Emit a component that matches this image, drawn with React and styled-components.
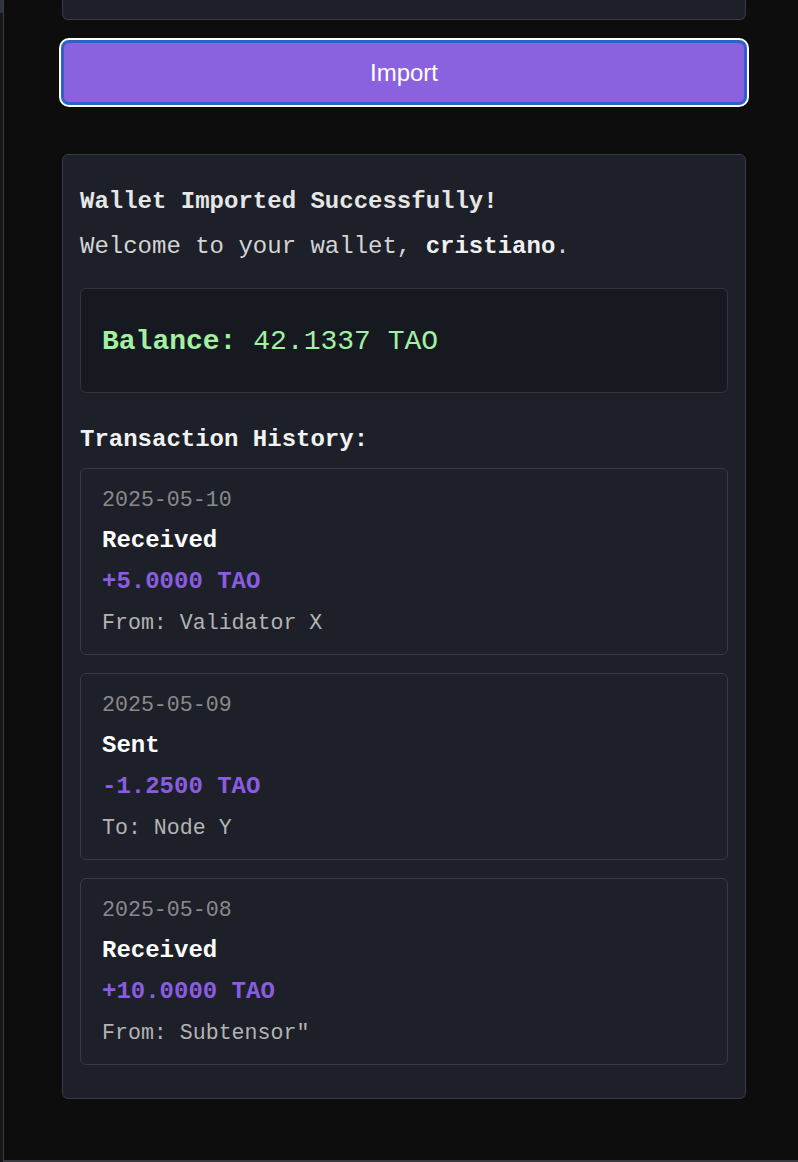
import React from 'react';
import styled, { createGlobalStyle } from 'styled-components';

const GlobalStyle = createGlobalStyle`
  html, body {
    margin: 0;
    padding: 0;
    background: #0d0d0d;
  }
  body {
    font-family: "Liberation Mono", "Courier New", monospace;
  }
`

const Screen = styled.div`
  display: flex;
  width: 798px;
  height: 1162px;
  overflow: hidden;
  background: #0d0d0d;
`

const Backdrop = styled.div`
  width: 3px;
  flex-shrink: 0;
  border-right: 1px solid #3a3c42;
  background: linear-gradient(#2f3440 0 13px, #151618 13px);
`

const Panel = styled.div`
  flex: 1;
  display: flex;
  flex-direction: column;
  padding: 0 0 0 58px;
  border-bottom: 2px solid #3a3a3e;
`

const Column = styled.div`
  width: 684px;
  display: flex;
  flex-direction: column;
`

const InputStub = styled.div`
  height: 19px;
  background: #1d2029;
  border: 1px solid #363a45;
  border-top: none;
  border-radius: 0 0 6px 6px;
`

const ImportButton = styled.button`
  margin-top: 21px;
  height: 63px;
  border: 2px solid #2e62c9;
  border-radius: 7px;
  background: #8a62e0;
  box-shadow: 0 0 0 1px #2e62c9, 0 0 0 3px #ffffff;
  color: #ffffff;
  font-family: "Liberation Sans", Arial, sans-serif;
  font-size: 24px;
  cursor: pointer;
`

const Result = styled.section`
  margin-top: 50px;
  padding: 33px 17px 33px;
  background: #1d2029;
  border: 1px solid #363a45;
  border-radius: 6px;
`

const Heading = styled.h3`
  margin: 0;
  font-size: 24px;
  line-height: 28px;
  font-weight: bold;
  color: #e6e6e6;
`

const Welcome = styled.p`
  margin: 17px 0 0;
  font-size: 24px;
  line-height: 28px;
  color: #d4d4d4;

  strong {
    color: #f0f0f0;
  }
`

const BalanceBox = styled.div`
  margin-top: 27px;
  padding: 36px 21px 34px;
  background: #161920;
  border: 1px solid #30343e;
  border-radius: 6px;
  font-size: 28px;
  line-height: 33px;
  color: #a3f0a3;

  strong {
    font-weight: bold;
  }
`

const HistoryTitle = styled(Heading)`
  margin-top: 33px;
  color: #f2f2f2;
`

const TxList = styled.div`
  margin-top: 14px;
  display: flex;
  flex-direction: column;
  gap: 18px;
`

const TxCard = styled.div`
  display: flex;
  flex-direction: column;
  gap: 15px;
  padding: 18px 21px;
  border: 1px solid #363a45;
  border-radius: 6px;
  line-height: 26px;
`

const TxDate = styled.div`
  font-size: 21.6px;
  color: #8a8a8a;
`

const TxType = styled.div`
  font-size: 24px;
  font-weight: bold;
  color: #ffffff;
`

const TxAmount = styled.div`
  font-size: 24px;
  font-weight: bold;
  color: #8a5de0;
`

const TxParty = styled.div`
  font-size: 21.6px;
  color: #b3b3b3;
`

const transactions = [
  { date: '2025-05-10', type: 'Received', amount: '+5.0000 TAO', party: 'From: Validator X' },
  { date: '2025-05-09', type: 'Sent', amount: '-1.2500 TAO', party: 'To: Node Y' },
  { date: '2025-05-08', type: 'Received', amount: '+10.0000 TAO', party: 'From: Subtensor"' },
]

const App = () => (
  <>
    <GlobalStyle />
    <Screen>
      <Backdrop />
      <Panel>
        <Column>
          <InputStub />
          <ImportButton>Import</ImportButton>
          <Result>
            <Heading>Wallet Imported Successfully!</Heading>
            <Welcome>
              Welcome to your wallet, <strong>cristiano</strong>.
            </Welcome>
            <BalanceBox>
              <strong>Balance:</strong> 42.1337 TAO
            </BalanceBox>
            <HistoryTitle>Transaction History:</HistoryTitle>
            <TxList>
              {transactions.map((tx) => (
                <TxCard key={tx.date}>
                  <TxDate>{tx.date}</TxDate>
                  <TxType>{tx.type}</TxType>
                  <TxAmount>{tx.amount}</TxAmount>
                  <TxParty>{tx.party}</TxParty>
                </TxCard>
              ))}
            </TxList>
          </Result>
        </Column>
      </Panel>
    </Screen>
  </>
)

export default App;
